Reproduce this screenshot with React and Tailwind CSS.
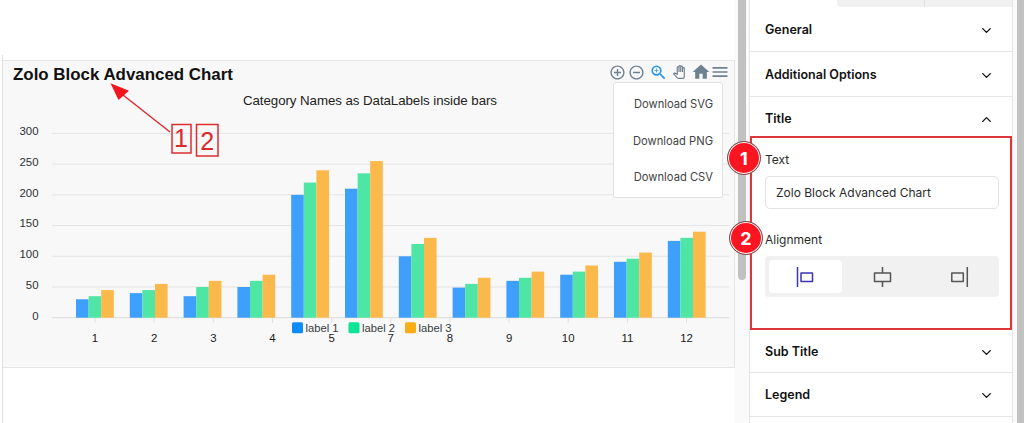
import React, { useState } from 'react'
import { ChevronDown, ChevronUp } from 'lucide-react'
import { MdAddCircleOutline, MdRemoveCircleOutline, MdZoomIn, MdOutlinePanTool, MdHome, MdMenu } from 'react-icons/md'

const chartData = [
  [30, 35, 45],
  [40, 45, 55],
  [35, 50, 60],
  [50, 60, 70],
  [200, 220, 240],
  [210, 235, 255],
  [100, 120, 130],
  [49, 55, 65],
  [60, 65, 75],
  [70, 75, 85],
  [91, 96, 106],
  [125, 130, 140],
]

const barColors = ['#3f9ffc', '#4fe5a4', '#fcb94b']
const categories = ['1', '2', '3', '4', '5', '7', '8', '9', '10', '11', '12']
const ticks = [300, 250, 200, 150, 100, 50, 0]

const legend = [
  { label: 'label 1', color: '#0d8df7', x: 289 },
  { label: 'label 2', color: '#0de396', x: 345.5 },
  { label: 'label 3', color: '#f9ae17', x: 402 },
]

const BASE_Y = 256.7
const UNIT = 0.6143

const BarChart = () => (
  <svg width="731" height="307" className="block font-['Liberation_Sans',sans-serif]">
    {/* Grid */}
    {ticks.map((t) => (
      <g key={t}>
        <line x1="49" x2="726.5" y1={BASE_Y - t * UNIT} y2={BASE_Y - t * UNIT} stroke={t ? '#e4e4e4' : '#dcdcdc'} />
        <text x="35.5" y={BASE_Y - t * UNIT + 1.8} textAnchor="end" fontSize="11.4" fill="#2d3235">{t}</text>
      </g>
    ))}

    {/* Bars */}
    {chartData.map((group, i) =>
      group.map((v, j) => (
        <rect
          key={`${i}-${j}`}
          x={73 + i * 53.8 + j * 12.6}
          y={BASE_Y - v * UNIT}
          width="12.6"
          height={v * UNIT}
          fill={barColors[j]}
        />
      ))
    )}

    {/* X axis */}
    {categories.map((c, i) => (
      <g key={c}>
        <line x1={92 + i * 59.15} x2={92 + i * 59.15} y1="257" y2="262" stroke="#e0e0e0" />
        <text x={92 + i * 59.15} y="280.7" textAnchor="middle" fontSize="11.4" fill="#1a1a1a">{c}</text>
      </g>
    ))}

    {legend.map((item) => (
      <g key={item.label}>
        <rect x={item.x} y="261.3" width="11" height="11" rx="1.5" fill={item.color} />
        <text x={item.x + 13.5} y="270.7" fontSize="11.2" fill="#373d3f">{item.label}</text>
      </g>
    ))}

    <text x="367" y="44.3" textAnchor="middle" fontSize="13.3" textLength="254" fill="#222">
      Category Names as DataLabels inside bars
    </text>
  </svg>
)

const Toolbar = () => (
  <div className="absolute left-[605.500px] top-[2px] flex h-[18px] items-center text-[#6e8192]">
    <MdAddCircleOutline size={17} />
    <MdRemoveCircleOutline size={17} className="ml-[2px]" />
    <MdZoomIn size={19} className="ml-[4px] text-[#2a95ee]" />
    <MdOutlinePanTool size={14} className="ml-[4px]" />
    <MdHome size={20} className="ml-[5px]" />
    <MdMenu size={20} className="-ml-px" />
  </div>
)

const DownloadMenu = () => (
  <div className="absolute left-[610px] top-[21px] flex h-[116px] w-[110px] flex-col justify-between rounded-[3px] border border-[#e2e2e2] bg-white pb-[12px] pt-[14px] pr-[9px] text-right font-['Inter',sans-serif] text-[11.200px] leading-[15px] text-[#444]">
    <span>Download SVG</span>
    <span>Download PNG</span>
    <span>Download CSV</span>
  </div>
)

const Annotation = () => (
  <div className="pointer-events-none absolute left-[100px] top-[20px]">
    <svg width="125" height="80" className="block font-['Liberation_Sans',sans-serif]">
      <path d="M67 51 20 14" stroke="#e0262c" strokeWidth="1.4" />
      <path d="M7.500 2.300 26 9.700 15.500 19Z" fill="#f5141c" />
      <g fill="none" stroke="#dd2c30" strokeWidth="1.500">
        <rect x="69" y="43.500" width="19" height="28.500" />
        <rect x="93.500" y="43.500" width="21.500" height="31.500" />
      </g>
      <text x="78" y="66" textAnchor="middle" fontSize="25" fill="#d92a2e">1</text>
      <text x="104.300" y="68.500" textAnchor="middle" fontSize="25" fill="#d92a2e">2</text>
    </svg>
  </div>
)

const AccordionHeader = ({ title, open, className }) => {
  const Icon = open ? ChevronUp : ChevronDown
  return (
    <button className={`flex w-full shrink-0 items-center justify-between pl-[15px] pr-[18px] text-[12.500px] font-semibold text-[#111] ${className}`}>
      {title}
      <Icon size={15} strokeWidth={2.2} />
    </button>
  )
}

const AlignIcon = ({ type }) => (
  <svg width="20" height="22" fill="none" stroke="currentColor" strokeWidth="1.500" strokeLinejoin="round">
    {type === 'left' && <path d="M2.500 1v20M6 7h11.500v8.500H6z" />}
    {type === 'center' && <path d="M10.500 1v6M10.500 15.500v5.500M2.500 7h16v8.500h-16z" />}
    {type === 'right' && <path d="M18.300 1v20M2.800 7h11.500v8.500H2.800z" />}
  </svg>
)

const Badge = ({ children, className }) => (
  <div className={`absolute flex h-[34px] w-[34px] items-center justify-center rounded-full border border-[#7d5555] bg-[#fa1520] text-[18px] font-bold text-white shadow-[inset_0_0_0_1px_#fff] ${className}`}>
    {children}
  </div>
)

const Sidebar = () => {
  const [text, setText] = useState('Zolo Block Advanced Chart')
  const [align, setAlign] = useState('left')

  return (
    <aside className="relative flex h-full w-[264px] shrink-0 flex-col border-x border-[#e5e5e5] bg-white">
      <div className="flex h-[7px] shrink-0 pl-[87px]">
        <div className="w-[88px] rounded-bl-[4px] border-r border-[#e0e0e0] bg-[#f1f1f1]" />
        <div className="flex-1 bg-[#f1f1f1]" />
      </div>
      <AccordionHeader title="General" className="h-[45px] border-b border-[#e5e5e5] pt-[3px]" />
      <AccordionHeader title="Additional Options" className="h-[45px] border-b border-[#e5e5e5] pt-[2px]" />
      <AccordionHeader title="Title" open className="h-[39px] pt-[6px]" />

      {/* Title settings */}
      <div className="h-[194px] shrink-0 border-2 border-[#dc383c] pl-[13px] pr-[11px] pt-[14px] text-[12px] text-[#2b2b2b]">
        <label className="block leading-[16px]">Text</label>
        <input
          value={text}
          onChange={(e) => setText(e.target.value)}
          className="mt-[8px] block h-[33px] w-full rounded-[5px] border border-[#e3e3e3] px-[10px] outline-none"
        />
        <label className="mt-[23px] block leading-[16px]">Alignment</label>
        <div className="mt-[8px] flex h-[41px] gap-[4px] rounded-[4px] bg-[#f1f1f1] p-[4px]">
          {['left', 'center', 'right'].map((type) => (
            <button
              key={type}
              onClick={() => setAlign(type)}
              className={`flex flex-1 items-center justify-center rounded-[4px] ${align === type ? 'bg-white text-[#3a35b0]' : 'text-[#555]'}`}
            >
              <AlignIcon type={type} />
            </button>
          ))}
        </div>
      </div>

      <AccordionHeader title="Sub Title" className="h-[43px] border-b border-[#e5e5e5] pt-[2px]" />
      <AccordionHeader title="Legend" className="h-[44px] border-b border-[#e5e5e5] pt-[2px]" />

      <Badge className="-left-[23px] top-[141px]">1</Badge>
      <Badge className="-left-[21px] top-[221px]">2</Badge>
    </aside>
  )
}

const App = () => (
  <div className="flex h-[423px] w-[1024px] overflow-hidden bg-white font-['Inter',sans-serif]">
    <main className="w-[735px] shrink-0 pl-[2px] pt-[55px]">
      <div className="h-full border-l border-[#e2e2e2] pt-[5px]">
        <div className="relative h-[308px] w-[732px] border border-l-0 border-[#e5e5e5] bg-[#f8f8f8]">
          <BarChart />
          <h2 className="absolute left-[10px] top-[3px] whitespace-nowrap font-['Liberation_Sans',sans-serif] text-[16.900px] font-bold leading-[22px] text-[#111]">
            Zolo Block Advanced Chart
          </h2>
          <Toolbar />
          <DownloadMenu />
          <Annotation />
        </div>
      </div>
    </main>

    {/* Editor scrollbar */}
    <div className="w-[14px] shrink-0 bg-[#fafafa] pl-[3px]">
      <div className="h-[280px] w-[8px] rounded-b-full bg-[#c1c1c1]" />
    </div>

    <Sidebar />

    <div className="flex-1 bg-[#fafafa] pl-[4px]">
      <div className="h-full bg-[#c1c1c1]" />
    </div>
  </div>
)

export default App
